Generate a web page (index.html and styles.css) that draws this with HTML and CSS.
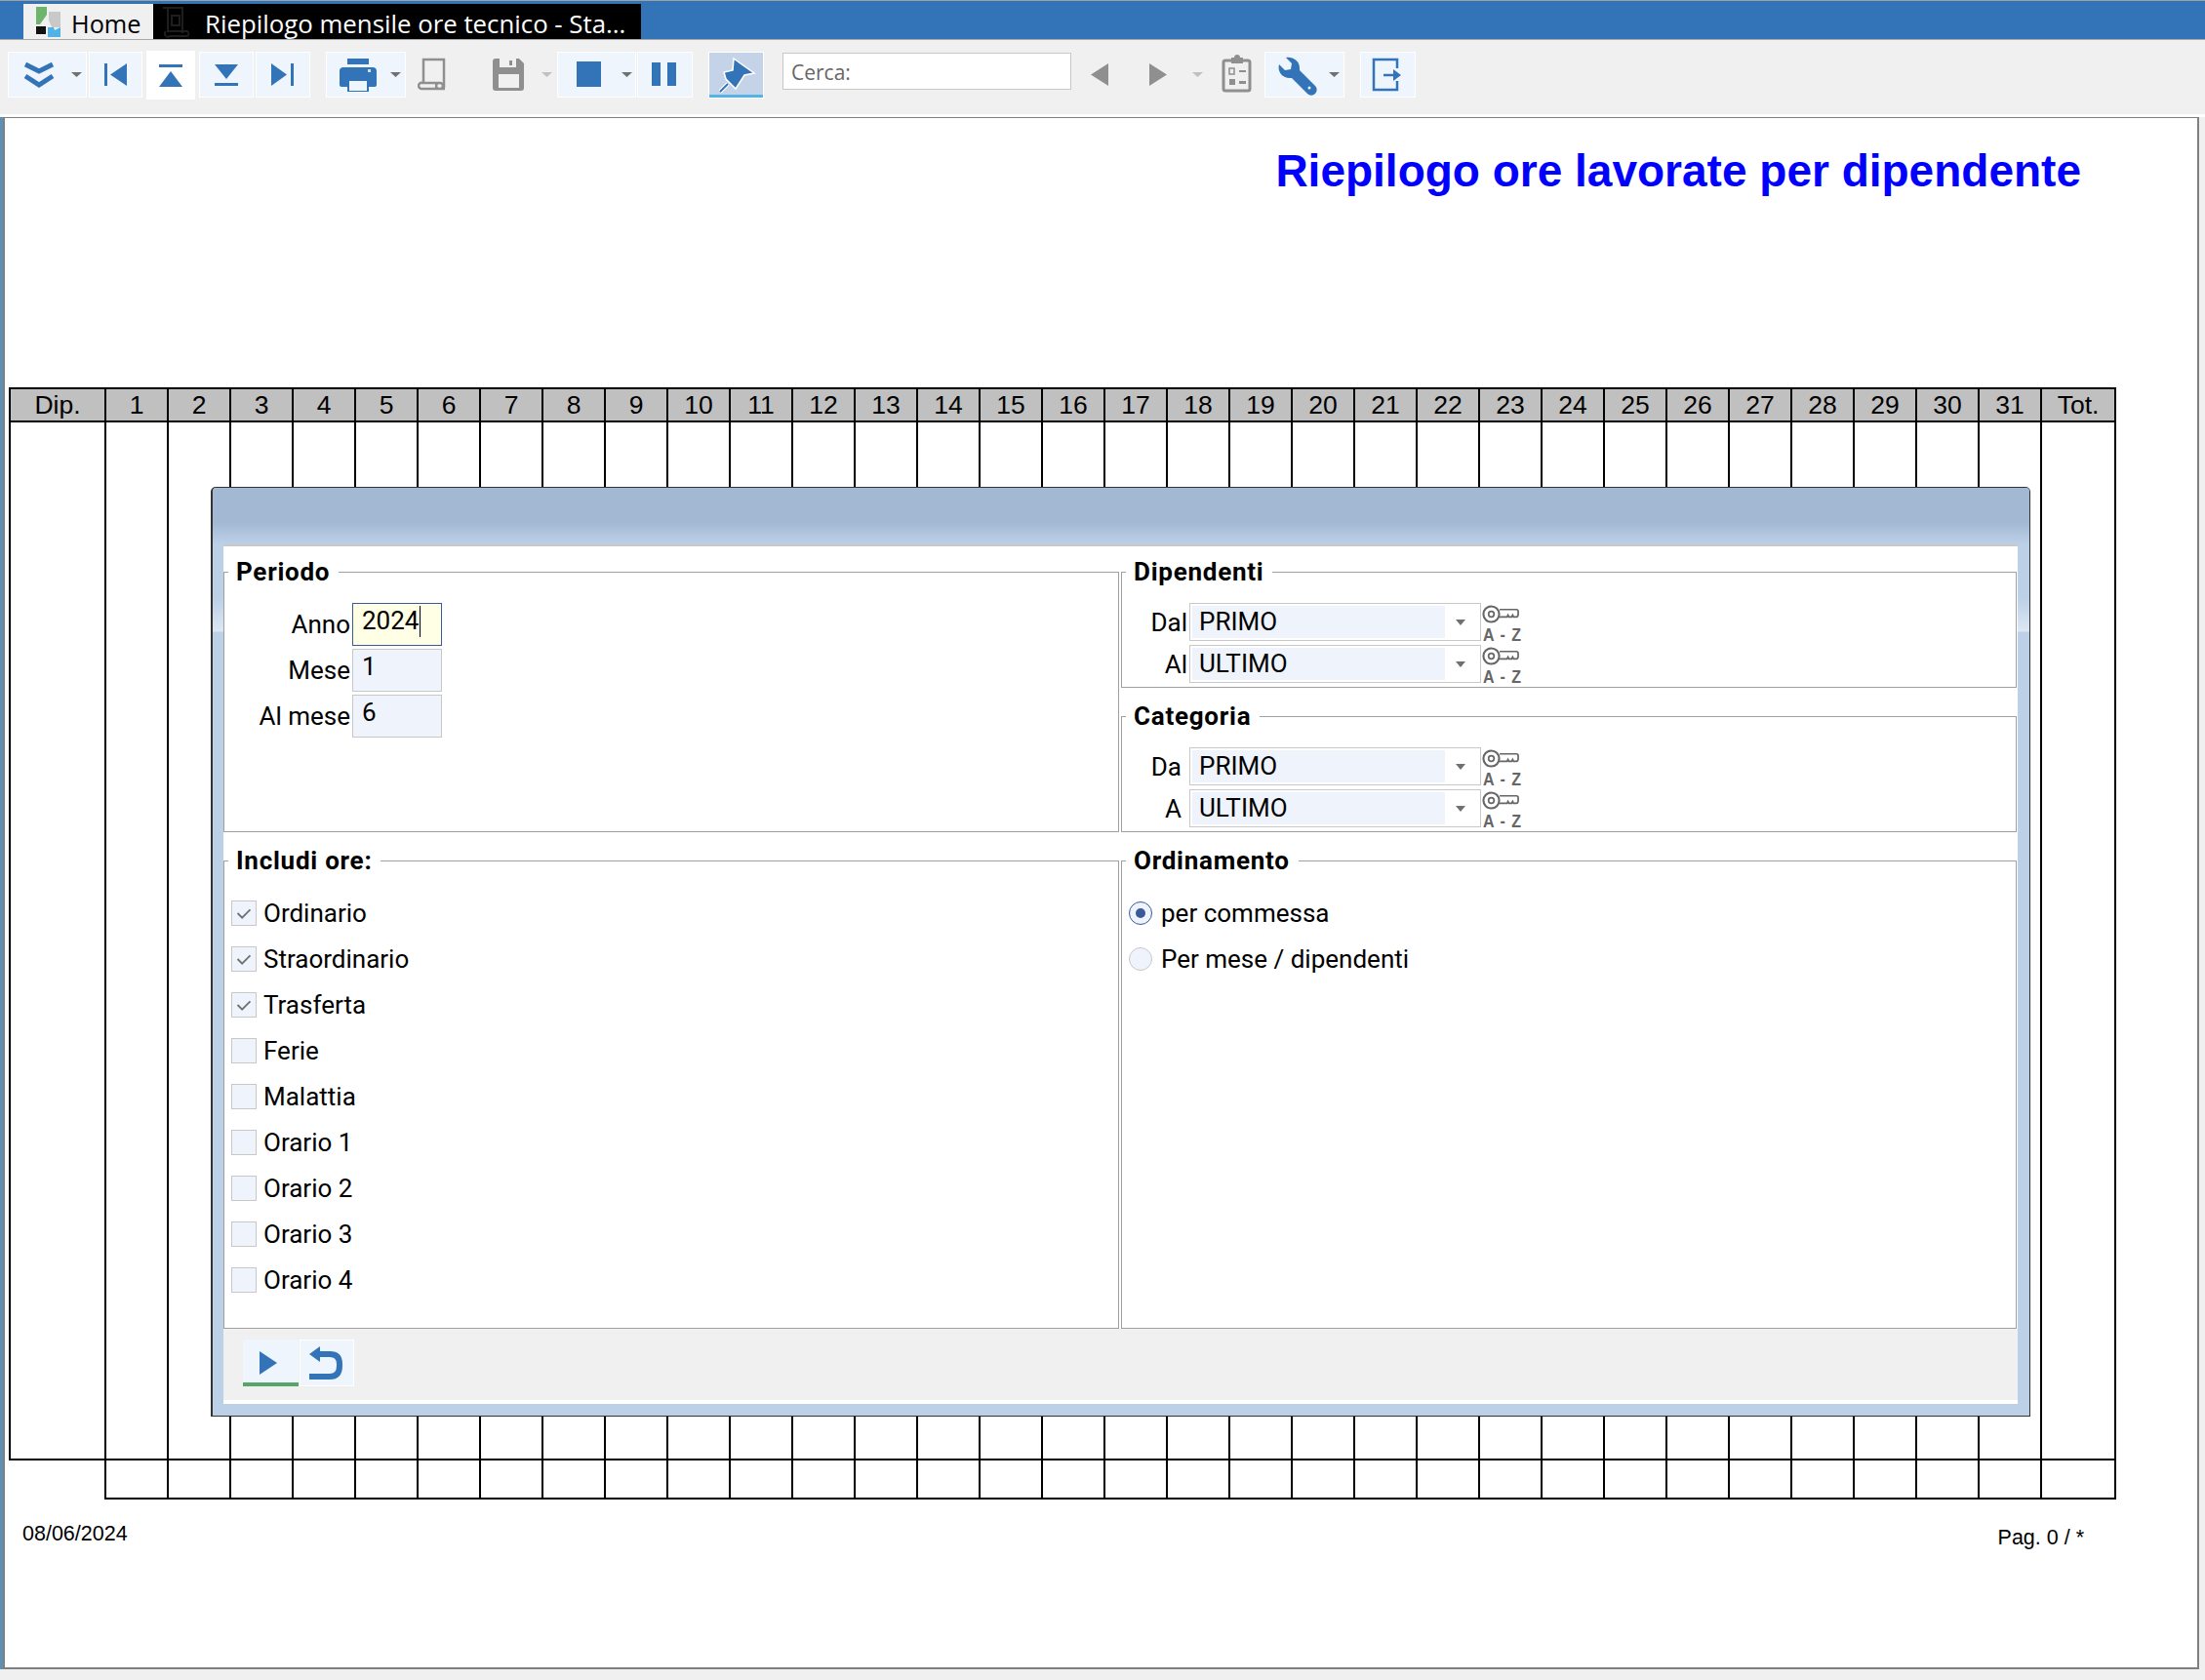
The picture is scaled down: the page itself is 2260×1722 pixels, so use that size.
FILE: index.html
```html
<!DOCTYPE html>
<html lang="it">
<head>
<meta charset="utf-8">
<title>Riepilogo ore</title>
<link rel="stylesheet" href="styles.css">
</head>
<body>
<header class="tabbar">
  <div class="tab tab-home">
    <svg class="tab-logo" viewBox="37 6 25 31"><polygon fill="#6db56d" points="37,6 48,6 48,14 41,24 37,24"/><polygon fill="#c9c9c9" points="50,11 62,11 62,27 53,27 50,20"/><rect fill="#111" x="37" y="26" width="10" height="8"/><polygon fill="#4fb3e6" points="49,27 55,27 56,30 62,27 62,37 49,37"/></svg>
    <span>Home</span>
  </div>
  <div class="tab tab-report">
    <svg class="tab-doc" viewBox="165 6 32 33"><path fill="none" stroke="#1e1e1e" stroke-width="2" d="M167 8h20v26M172 8v24h20a3 3 0 0 1 0 5h-18a3 3 0 0 1 -4-5M176 16h8v10h-8z"/></svg>
    <span>Riepilogo mensile ore tecnico - Sta...</span>
  </div>
</header>
<nav class="toolbar">
  <div class="tb tb-expand"><svg viewBox="8 53 81 47"><path fill="none" stroke="#3374b8" stroke-width="5" d="M26 66l14 7 14-7M26 78l14 9 14-9"/><polygon fill="#707070" points="73,74 84,74 78.500,79"/></svg></div>
  <div class="tb tb-first"><svg viewBox="91 53 55 47"><rect fill="#3374b8" x="107" y="65" width="3" height="23"/><polygon fill="#3374b8" points="113,76.500 130,65 130,88"/></svg></div>
  <div class="tb tb-prev"><svg viewBox="150 52 50 50"><rect fill="#3374b8" x="163" y="66" width="24" height="3"/><polygon fill="#3374b8" points="175,73 187,89 163,89"/></svg></div>
  <div class="tb tb-next"><svg viewBox="204 53 56 47"><polygon fill="#3374b8" points="220,66 244,66 232,81"/><rect fill="#3374b8" x="220" y="85" width="24" height="3"/></svg></div>
  <div class="tb tb-last"><svg viewBox="262 53 56 47"><polygon fill="#3374b8" points="278,65 294,76.500 278,88"/><rect fill="#3374b8" x="298" y="65" width="3" height="23"/></svg></div>
  <div class="tb tb-print"><svg viewBox="334 53 82 47"><rect fill="#3374b8" x="356" y="60" width="22" height="6"/><path fill="#3374b8" d="M348 73q0-4 4-4h30q4 0 4 4v14q0 2-2 2h-6v5h-22v-5h-6q-2 0-2-2z"/><rect fill="#eef5fc" x="358" y="83" width="18" height="10"/><rect fill="#cfe0f2" x="377" y="71" width="3" height="3"/><polygon fill="#707070" points="400,74 411,74 405.500,79"/></svg></div>
  <div class="tb-plain tb-roll"><svg viewBox="428 53 30 47"><path fill="none" stroke="#8f8f8f" stroke-width="2.500" d="M434 84V61h21v29M430 90a3 3 0 0 1 3-5h18a3 3 0 0 1 0 6h-18a3 3 0 0 1 -3-1zM450 85a3 3 0 0 0 0 6h6"/></svg></div>
  <div class="tb-plain tb-save"><svg viewBox="505 53 61 47"><path fill="#8f8f8f" d="M505 63q0-3 3-3h24l5 5v25q0 3-3 3h-26q-3 0-3-3z"/><rect fill="#f0f0f0" x="512" y="60" width="17" height="9"/><rect fill="#8f8f8f" x="522" y="62" width="3" height="5"/><rect fill="#f0f0f0" x="511" y="76" width="21" height="14"/><polygon fill="#c0c0c0" points="555,74 566,74 560.500,79"/></svg></div>
  <div class="tb tb-stop"><svg viewBox="571 53 81 47"><rect fill="#3374b8" x="591" y="63" width="25" height="26"/><polygon fill="#707070" points="637,74 648,74 642.500,79"/></svg></div>
  <div class="tb tb-pause"><svg viewBox="653 53 57 47"><rect fill="#3374b8" x="668" y="64" width="9" height="24"/><rect fill="#3374b8" x="684" y="64" width="9" height="24"/></svg></div>
  <div class="tb tb-pin"><svg viewBox="727 54 55 43"><path fill="#3374b8" stroke="#fff" stroke-width="1.500" d="M752 60l21 15-10 2-9 14-10-10-2-7 9-2z"/><path fill="none" stroke="#fff" stroke-width="4" d="M746 86l-8 8"/><path fill="none" stroke="#3374b8" stroke-width="2" d="M746 86l-8 8"/></svg></div>
  <div class="search">Cerca:</div>
  <div class="tb-plain tb-back"><svg viewBox="1119 53 18 47"><polygon fill="#8f8f8f" points="1119,76.500 1137,65 1137,88"/></svg></div>
  <div class="tb-plain tb-fwd"><svg viewBox="1178 53 62 47"><polygon fill="#8f8f8f" points="1178,65 1196,76.500 1178,88"/><polygon fill="#c0c0c0" points="1222,74 1233,74 1227.500,79"/></svg></div>
  <div class="tb-plain tb-clip"><svg viewBox="1252 53 31 47"><rect fill="none" stroke="#8f8f8f" stroke-width="3" x="1254" y="62" width="27" height="31" rx="2"/><path fill="#8f8f8f" d="M1262 59h3a3 3 0 0 1 6 0h3v6h-12z"/><path fill="none" stroke="#8f8f8f" stroke-width="1.500" d="M1260 70h5v6h-5z"/><rect fill="#8f8f8f" x="1270" y="72" width="7" height="2"/><rect fill="#8f8f8f" x="1260" y="81" width="6" height="6"/><rect fill="#8f8f8f" x="1270" y="83" width="7" height="3"/></svg></div>
  <div class="tb tb-tools"><svg viewBox="1296 53 82 47"><path fill="#3374b8" d="M1311 66l6 6 6-1 1-6-6-6c7-1 14 3 14 11v2l16 16a5 5 0 0 1-8 8l-16-16h-2c-8 0-13-7-11-14z"/><circle fill="#eef5fc" cx="1342" cy="90" r="1.500"/><polygon fill="#707070" points="1362,74 1373,74 1367.500,79"/></svg></div>
  <div class="tb tb-exit"><svg viewBox="1394 53 57 47"><path fill="none" stroke="#3374b8" stroke-width="2.500" d="M1432 70V61h-24v31h24v-9"/><path fill="none" stroke="#3374b8" stroke-width="2.500" d="M1418 77h14"/><polygon fill="#3374b8" points="1428,71 1436,77 1428,83"/></svg></div>
</nav>
<main class="workspace">
  <div class="edge"></div>
  <section class="page">
    <h1 class="report-title">Riepilogo ore lavorate per dipendente</h1>
    <div class="sheet">
      <div class="row row-head">
        <div class="cell">Dip.</div><div class="cell">1</div><div class="cell">2</div><div class="cell">3</div><div class="cell">4</div><div class="cell">5</div><div class="cell">6</div><div class="cell">7</div><div class="cell">8</div><div class="cell">9</div><div class="cell">10</div><div class="cell">11</div><div class="cell">12</div><div class="cell">13</div><div class="cell">14</div><div class="cell">15</div><div class="cell">16</div><div class="cell">17</div><div class="cell">18</div><div class="cell">19</div><div class="cell">20</div><div class="cell">21</div><div class="cell">22</div><div class="cell">23</div><div class="cell">24</div><div class="cell">25</div><div class="cell">26</div><div class="cell">27</div><div class="cell">28</div><div class="cell">29</div><div class="cell">30</div><div class="cell">31</div><div class="cell">Tot.</div>
      </div>
      <div class="row row-body">
        <div class="cell"></div><div class="cell"></div><div class="cell"></div><div class="cell"></div><div class="cell"></div><div class="cell"></div><div class="cell"></div><div class="cell"></div><div class="cell"></div><div class="cell"></div><div class="cell"></div><div class="cell"></div><div class="cell"></div><div class="cell"></div><div class="cell"></div><div class="cell"></div><div class="cell"></div><div class="cell"></div><div class="cell"></div><div class="cell"></div><div class="cell"></div><div class="cell"></div><div class="cell"></div><div class="cell"></div><div class="cell"></div><div class="cell"></div><div class="cell"></div><div class="cell"></div><div class="cell"></div><div class="cell"></div><div class="cell"></div><div class="cell"></div><div class="cell"></div>
      </div>
      <div class="row row-foot">
        <div class="cell"></div><div class="cell"></div><div class="cell"></div><div class="cell"></div><div class="cell"></div><div class="cell"></div><div class="cell"></div><div class="cell"></div><div class="cell"></div><div class="cell"></div><div class="cell"></div><div class="cell"></div><div class="cell"></div><div class="cell"></div><div class="cell"></div><div class="cell"></div><div class="cell"></div><div class="cell"></div><div class="cell"></div><div class="cell"></div><div class="cell"></div><div class="cell"></div><div class="cell"></div><div class="cell"></div><div class="cell"></div><div class="cell"></div><div class="cell"></div><div class="cell"></div><div class="cell"></div><div class="cell"></div><div class="cell"></div><div class="cell"></div><div class="cell"></div>
      </div>
    </div>
    <div class="page-foot"><span class="date">08/06/2024</span><span class="pageno">Pag. 0 / *</span></div>

    <div class="dialog">
      <div class="dlg-head"></div>
      <div class="dlg-client">
        <div class="groups">
          <fieldset class="box box-periodo">
            <legend>Periodo</legend>
            <div class="frow"><label>Anno</label><div class="field field-focus">2024<span class="caret"></span></div></div>
            <div class="frow"><label>Mese</label><div class="field">1</div></div>
            <div class="frow"><label>Al mese</label><div class="field">6</div></div>
          </fieldset>
          <div class="stack">
            <fieldset class="box box-dip">
              <legend>Dipendenti</legend>
              <div class="crow"><label>Dal</label><div class="combo"><div class="combo-val">PRIMO</div><span class="arrow"></span></div>
                <div class="keyaz"><svg viewBox="0 0 40 20"><circle cx="10" cy="10" r="8.500" fill="none" stroke="#666" stroke-width="2.200"/><circle cx="10" cy="10" r="3" fill="none" stroke="#666" stroke-width="1.800"/><path fill="none" stroke="#666" stroke-width="1.800" d="M19 5h18q2 0 2 2v3q0 3-2 3h-3l-1-2-1 2h-3l-1-2-1 2h-8"/></svg><span>A - Z</span></div></div>
              <div class="crow"><label>Al</label><div class="combo"><div class="combo-val">ULTIMO</div><span class="arrow"></span></div>
                <div class="keyaz"><svg viewBox="0 0 40 20"><circle cx="10" cy="10" r="8.500" fill="none" stroke="#666" stroke-width="2.200"/><circle cx="10" cy="10" r="3" fill="none" stroke="#666" stroke-width="1.800"/><path fill="none" stroke="#666" stroke-width="1.800" d="M19 5h18q2 0 2 2v3q0 3-2 3h-3l-1-2-1 2h-3l-1-2-1 2h-8"/></svg><span>A - Z</span></div></div>
            </fieldset>
            <fieldset class="box box-cat">
              <legend>Categoria</legend>
              <div class="crow crow-narrow"><label>Da</label><div class="combo"><div class="combo-val">PRIMO</div><span class="arrow"></span></div>
                <div class="keyaz"><svg viewBox="0 0 40 20"><circle cx="10" cy="10" r="8.500" fill="none" stroke="#666" stroke-width="2.200"/><circle cx="10" cy="10" r="3" fill="none" stroke="#666" stroke-width="1.800"/><path fill="none" stroke="#666" stroke-width="1.800" d="M19 5h18q2 0 2 2v3q0 3-2 3h-3l-1-2-1 2h-3l-1-2-1 2h-8"/></svg><span>A - Z</span></div></div>
              <div class="crow crow-narrow"><label>A</label><div class="combo"><div class="combo-val">ULTIMO</div><span class="arrow"></span></div>
                <div class="keyaz"><svg viewBox="0 0 40 20"><circle cx="10" cy="10" r="8.500" fill="none" stroke="#666" stroke-width="2.200"/><circle cx="10" cy="10" r="3" fill="none" stroke="#666" stroke-width="1.800"/><path fill="none" stroke="#666" stroke-width="1.800" d="M19 5h18q2 0 2 2v3q0 3-2 3h-3l-1-2-1 2h-3l-1-2-1 2h-8"/></svg><span>A - Z</span></div></div>
            </fieldset>
          </div>
          <fieldset class="box box-lower">
            <legend>Includi ore:</legend>
            <div class="opts">
              <div class="opt"><span class="chk"><svg viewBox="0 0 26 26"><path fill="none" stroke="#707070" stroke-width="2" d="M6 13l5 5 9-9"/></svg></span>Ordinario</div>
              <div class="opt"><span class="chk"><svg viewBox="0 0 26 26"><path fill="none" stroke="#707070" stroke-width="2" d="M6 13l5 5 9-9"/></svg></span>Straordinario</div>
              <div class="opt"><span class="chk"><svg viewBox="0 0 26 26"><path fill="none" stroke="#707070" stroke-width="2" d="M6 13l5 5 9-9"/></svg></span>Trasferta</div>
              <div class="opt"><span class="chk"></span>Ferie</div>
              <div class="opt"><span class="chk"></span>Malattia</div>
              <div class="opt"><span class="chk"></span>Orario 1</div>
              <div class="opt"><span class="chk"></span>Orario 2</div>
              <div class="opt"><span class="chk"></span>Orario 3</div>
              <div class="opt"><span class="chk"></span>Orario 4</div>
            </div>
          </fieldset>
          <fieldset class="box box-lower">
            <legend>Ordinamento</legend>
            <div class="opts">
              <div class="opt opt-radio"><span class="radio radio-on"></span>per commessa</div>
              <div class="opt opt-radio"><span class="radio"></span>Per mese / dipendenti</div>
            </div>
          </fieldset>
        </div>
        <div class="dlg-actions">
          <div class="act act-run"><svg viewBox="249 1373 57 44"><polygon fill="#3374b8" points="266,1385 284,1397 266,1409"/></svg></div>
          <div class="act act-undo"><svg viewBox="307 1373 56 48"><path fill="none" stroke="#3374b8" stroke-width="6" d="M325 1388h13q10 0 10 10v2q0 11-10 11h-21"/><polygon fill="#3374b8" points="317,1388 328,1380 328,1396"/></svg></div>
        </div>
      </div>
    </div>
  </section>
</main>
<div class="statusbar"></div>
</body>
</html>
```
FILE: styles.css
```css
* { box-sizing: border-box; }
html, body { margin: 0; padding: 0; }
body {
  width: 2260px;
  height: 1722px;
  background: #f0f0f0;
  display: flex;
  flex-direction: column;
  overflow: hidden;
  font-family: Roboto, sans-serif;
  color: #000;
}
/* tab bar */
.tabbar {
  height: 41px;
  flex: none;
  background: #3374b8;
  border-top: 1px solid #a0a0a0;
  border-bottom: 1px solid #a9a9a9;
  padding: 3px 0 0 24px;
  display: flex;
  font-family: "Open Sans", sans-serif;
  font-size: 25.300px;
}
.tab { height: 36px; display: flex; align-items: center; }
.tab span { line-height: 36px; margin-top: 3px; }
.tab-home { width: 133px; background: #f0f0f0; color: #000; padding-left: 13px; }
.tab-logo { width: 25px; height: 31px; margin-right: 11px; }
.tab-report { width: 500px; background: #000; color: #fff; padding-left: 8px; font-size: 25.800px; }
.tab-doc { width: 32px; height: 33px; margin-right: 13px; }
/* toolbar */
.toolbar {
  height: 79px;
  flex: none;
  background: #f0f0f0;
  border-bottom: 3px solid #fff;
  padding-top: 12px;
  display: flex;
  align-items: flex-start;
}
.tb, .tb-plain { height: 47px; flex: none; }
.tb { background: #eef5fc; outline: 1px solid #fff; outline-offset: -1px; }
.tb svg, .tb-plain svg { display: block; width: 100%; height: 100%; }
.tb-expand { width: 81px; margin-left: 8px; }
.tb-first { width: 55px; margin-left: 2px; }
.tb-prev { width: 50px; height: 50px; margin: -1px 0 0 4px; background: #fff; outline: none; }
.tb-next { width: 56px; margin-left: 4px; }
.tb-last { width: 56px; margin-left: 2px; }
.tb-print { width: 82px; margin-left: 16px; }
.tb-roll { width: 30px; margin-left: 12px; }
.tb-save { width: 61px; margin-left: 47px; }
.tb-stop { width: 81px; margin-left: 5px; }
.tb-pause { width: 57px; margin-left: 1px; }
.tb-pin {
  width: 57px;
  height: 48px;
  margin-left: 16px;
  background: #c5d3e8;
  padding: 1px 1px 0;
  outline: 1px solid #fff;
  outline-offset: -1px;
  border-bottom: 4px solid #56b4e3;
}
.search {
  width: 296px;
  height: 38px;
  margin: 1px 0 0 19px;
  background: #fff;
  border: 1px solid #c8c8c8;
  padding-left: 8px;
  font: 21px/38px "Open Sans", sans-serif;
  color: #666;
  flex: none;
}
.tb-back { width: 18px; margin-left: 20px; }
.tb-fwd { width: 62px; margin-left: 42px; }
.tb-clip { width: 31px; margin-left: 12px; }
.tb-tools { width: 82px; margin-left: 13px; }
.tb-exit { width: 57px; margin-left: 16px; }
/* workspace */
.workspace { flex: 1; display: flex; min-height: 0; }
.edge { width: 3px; flex: none; background: #5e8fb5; }
.page {
  position: relative;
  width: 2251px;
  flex: none;
  background: #fff;
  border-left: 2px solid #808080;
  border-right: 2px solid #808080;
  border-bottom: 2px solid #808080;
  border-top: 1px solid #808080;
  padding-left: 4px;
}
.report-title {
  margin: 0;
  height: 276px;
  padding: 27px 119px 0 0;
  text-align: right;
  font: bold 46px/54px "Liberation Sans", sans-serif;
  color: #0000ff;
}
.sheet { width: 2160px; font: 26.500px "Liberation Sans", sans-serif; }
.row {
  display: grid;
  grid-template-columns: 98px repeat(31, 64px) 78px;
}
.cell { border-left: 2px solid #000; }
.cell:last-child { border-right: 2px solid #000; }
.row-head { border-top: 2px solid #000; border-bottom: 2px solid #000; }
.row-head .cell { height: 32px; background: #c0c0c0; text-align: center; line-height: 32px; border-color: #000; }
.row-body { border-bottom: 2px solid #000; }
.row-body .cell { height: 1062px; }
.row-foot .cell { height: 40px; border-bottom: 2px solid #000; }
.row-foot .cell:first-child { border: 0; }
.page-foot {
  display: flex;
  justify-content: space-between;
  align-items: flex-start;
  width: 2113px;
  margin: 23px 0 0 14px;
  font: 21.500px/24px "Liberation Sans", sans-serif;
}
.pageno { margin-top: 4px; }
/* dialog */
.dialog {
  position: absolute;
  left: 211px;
  top: 378px;
  width: 1865px;
  height: 953px;
  border: 1px solid #333;
  border-left-width: 2px;
  border-radius: 5px 5px 0 0;
  background: linear-gradient(to bottom, #bcd0e8 0, #bcd0e8 113px, #dde7f3 147px, #bcd0e8 148px);
  padding: 0 12px 12px 11px;
  display: flex;
  flex-direction: column;
}
.dlg-head {
  height: 58px;
  flex: none;
  margin: 0 -12px 0 -11px;
  border-radius: 4px 4px 0 0;
  background: linear-gradient(to bottom, #a3b8d3 0, #a3b8d3 60%, #bcd0e8 100%);
}
.dlg-client {
  flex: 1;
  background: #fff;
  border-top: 2px solid #c8c8c8;
  padding-bottom: 4px;
  display: flex;
  flex-direction: column;
  font-size: 26px;
}
.groups {
  display: grid;
  grid-template-columns: 918px 918px;
  column-gap: 2px;
  grid-template-rows: 293px 509px;
}
.box { margin: 0; padding: 0; border: 1px solid #a0a0a0; min-width: 0; }
.box legend {
  margin-left: 4px;
  padding: 0 9px 0 8px;
  font-weight: 700;
  line-height: 32px;
  font-size: 26px;
  letter-spacing: 0.750px;
}
.box-periodo { margin-top: 10px; height: 283px; padding-top: 16px; }
.stack { display: flex; flex-direction: column; padding-top: 10px; }
.box-dip { height: 135px; padding-top: 16px; }
.box-cat { height: 135px; margin-top: 13px; padding-top: 16px; }
.box-lower { margin-top: 13px; height: 496px; }
.frow { display: flex; height: 44px; margin-bottom: 3px; }
.frow label { width: 129px; text-align: right; line-height: 30px; padding-top: 7px; }
.field {
  width: 92px;
  height: 44px;
  margin-left: 2px;
  background: #eff4fc;
  border: 1px solid #c8c8c8;
  padding: 2px 0 0 9px;
  line-height: 30px;
  display: flex;
  align-items: flex-start;
}
.field-focus { background: #ffffe6; border-color: #3a5a9a; }
.caret { width: 1px; height: 32px; background: #000; margin: 0 0 0 1px; }
.crow { display: flex; height: 39px; margin-bottom: 4px; }
.crow label { width: 67px; text-align: right; line-height: 30px; padding-top: 5px; }
.crow-narrow label { width: 61px; }
.crow .combo { margin-left: 2px; }
.crow-narrow .combo { margin-left: 8px; }
.combo {
  width: 299px;
  height: 39px;
  background: #fff;
  border: 1px solid #c8c8c8;
  padding: 2px;
  display: flex;
}
.combo-val { width: 259px; height: 33px; background: #eff4fc; padding-left: 7px; line-height: 33px; }
.arrow {
  width: 0;
  height: 0;
  margin: 14px 0 0 11px;
  border-left: 5px solid transparent;
  border-right: 5px solid transparent;
  border-top: 6px solid #707070;
}
.keyaz { width: 41px; height: 41px; margin: 2px 0 0 0; display: flex; flex-direction: column; color: #666; }
.keyaz svg { width: 40px; height: 20px; display: block; }
.keyaz span {
  font: bold 16px/20px "Liberation Sans", sans-serif;
  letter-spacing: 1px;
  white-space: nowrap;
  transform: scaleY(1.2);
  transform-origin: 0 60%;
  margin: 2px 0 0 2px;
}
.opts { padding: 25px 0 0 7px; display: flex; flex-direction: column; gap: 21px; }
.opt { display: flex; align-items: center; height: 26px; line-height: 26px; }
.chk { width: 26px; height: 26px; flex: none; background: #eff4fc; border: 1px solid #c8c8c8; margin-right: 7px; }
.chk svg { display: block; width: 24px; height: 24px; }
.radio { width: 24px; height: 24px; flex: none; border-radius: 50%; background: #eff4fc; border: 1px solid #c8c8c8; margin-right: 9px; position: relative; }
.radio-on { border-color: #3a5a9a; }
.radio-on::after {
  content: "";
  position: absolute;
  left: 6px;
  top: 6px;
  width: 10px;
  height: 10px;
  border-radius: 50%;
  background: #3a5a9a;
}
.dlg-actions {
  flex: 1;
  background: #f0f0f0;
  padding: 11px 0 0 20px;
  display: flex;
  align-items: flex-start;
  gap: 1px;
}
.act { width: 57px; height: 48px; background: #eef5fc; }
.act svg { display: block; width: 100%; }
.act-run { border-bottom: 4px solid #5aa469; }
.act-undo { width: 56px; outline: 1px solid #fff; outline-offset: -1px; }
.statusbar { height: 11px; flex: none; background: #f0f0f0; }
```
